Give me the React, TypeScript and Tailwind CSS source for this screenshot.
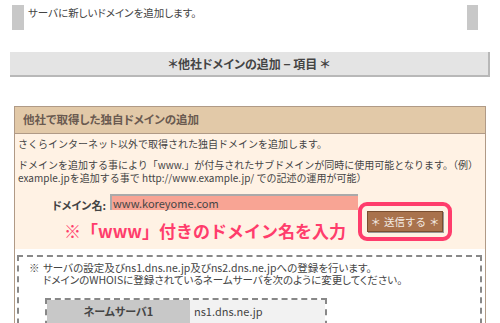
import React from "react";

export default function App() {
  return (
    <div className="w-[500px] h-[323px] bg-white overflow-hidden text-[#333] font-['Noto_Sans_CJK_JP','Noto_Sans',sans-serif]">
      {/* top note */}
      <div className="flex items-start pt-[5px] pl-[12px] pr-[22px] h-[52px]">
        <div className="w-[12px] h-[25px] bg-[#c8c8c8]" />
        <div className="ml-[4px] text-[10.5px] leading-[16px] text-[#444] [font-feature-settings:'palt']">サーバに新しいドメインを追加します。</div>
        <div className="flex-1" />
        <div className="w-[11px] h-[25px] bg-[#c8c8c8]" />
      </div>
      {/* section header */}
      <div className="mx-[10px] h-[25px] bg-[#e4e4e4] border-r-2 border-b-2 border-[#b8b8b8] flex items-center justify-center text-[12px] font-bold text-[#444] [font-feature-settings:'palt']">
        ＊他社ドメインの追加 − 項目 ＊
      </div>
      {/* main box */}
      <div className="ml-[14px] w-[472px] mt-[29px] border border-[#b09a86]">
        <div className="h-[27px] bg-[#e2c9a8] border-b border-[#b09a86] flex items-center pl-[8px] text-[11.5px] font-bold text-[#6a5a50] [font-feature-settings:'palt']">
          他社で取得した独自ドメインの追加
        </div>
        <div className="bg-[#fff2e4] pl-[3px] pt-[3px] pb-[8px] text-[10px] leading-[13px] text-[#444] whitespace-nowrap">
          <div>さくらインターネット以外で取得された独自ドメインを追加します。</div>
          <div className="mt-[8px]">ドメインを追加する事により「www.」が付与されたサブドメインが同時に使用可能となります。（例）</div>
          <div>example.jpを追加する事で http://www.example.jp/ での記述の運用が可能）</div>
          <div className="flex items-start mt-[4px]">
            <div className="w-[92px] text-right pr-[4px] pt-[11px] text-[11px] font-bold text-[#444] [font-feature-settings:'palt']">ドメイン名:</div>
            <div className="flex flex-col">
              <div className="mt-[6px] w-[248px] h-[16px] bg-[#f8a494] border-t-2 border-l-2 border-[#aaa] flex items-center pl-[1px] text-[11px] text-[#444]">
                www.koreyome.com
              </div>
              <div className="-ml-[46px] mt-[11px] text-[17px] font-bold text-[#ff3d6c] leading-[20px] whitespace-nowrap">
                ※「www」付きのドメイン名を入力
              </div>
            </div>
            <div className="mt-[14px] w-[94px] h-[39px] border-[4px] border-[#ff3d6c] rounded-[9px] flex items-center justify-center">
              <div className="w-[76px] h-[21px] bg-[#a9724c] border border-[#7a4e30] shadow-[1px_1px_0_#999] text-[#f4ece4] text-[10.5px] flex items-center justify-center gap-[3px]">
                <span>＊</span><span>送信する</span><span>＊</span>
              </div>
            </div>
          </div>
        </div>
        <div className="bg-white pt-[6px] pl-[2px]">
          <div className="w-[465px] h-[80px] border-2 border-dashed border-[#888] border-b-0 px-[10px] pt-[5px] text-[10.5px] leading-[12px] text-[#444] [font-feature-settings:'palt']">
            <div className="flex">
              <div className="w-[14px]">※</div>
              <div>
                <div>サーバの設定及びns1.dns.ne.jp及びns2.dns.ne.jpへの登録を行います。</div>
                <div>ドメインのWHOISに登録されているネームサーバを次のように変更してください。</div>
              </div>
            </div>
            <div className="ml-[16px] mt-[12px] w-[282px] border-2 border-dashed border-[#888] border-b-0 flex h-[40px]">
              <div className="w-[143px] bg-[#c8c8c8] flex justify-center pt-[5px] text-[11px] font-bold text-[#444]">ネームサーバ1</div>
              <div className="flex-1 bg-[#f2f2f2] pl-[4px] pt-[5px] text-[11px]">ns1.dns.ne.jp</div>
            </div>
          </div>
        </div>
      </div>
    </div>
  );
}
